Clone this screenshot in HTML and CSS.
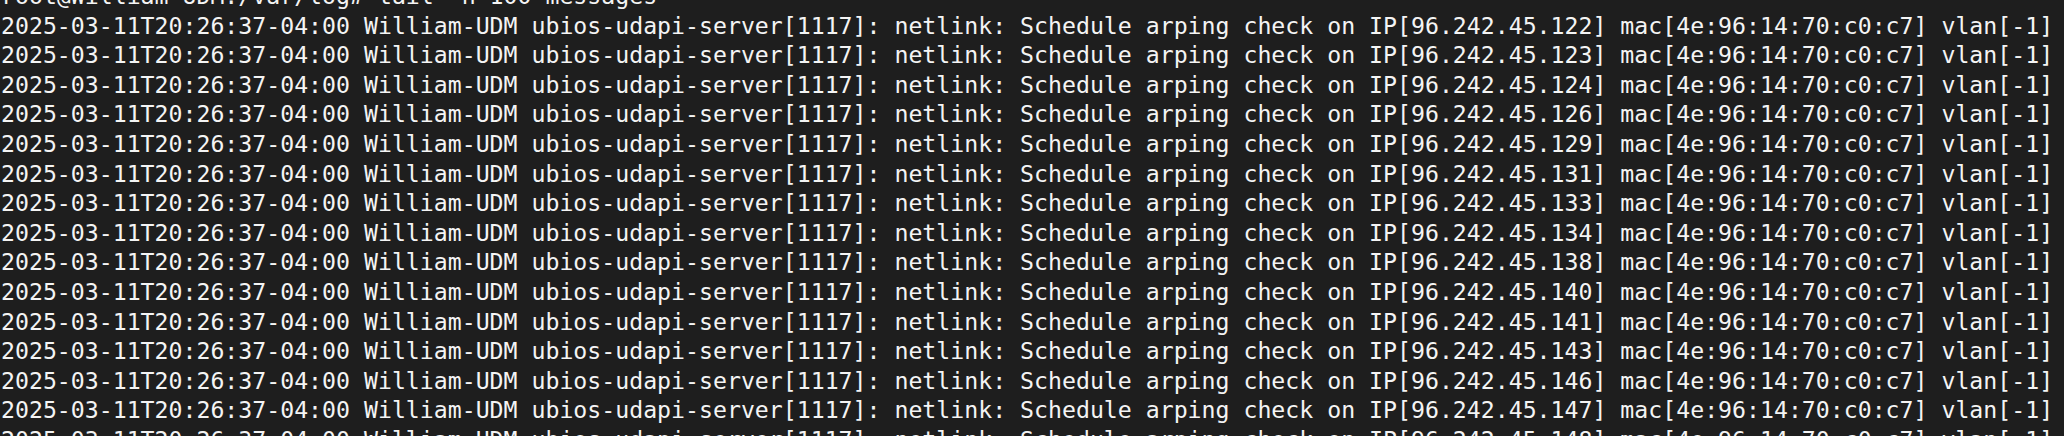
FILE: index.html
```html
<!DOCTYPE html>
<html>
<head>
<meta charset="utf-8">
<link rel="stylesheet" href="styles.css">
</head>
<body>
<div class="terminal">
<div class="line">root@William-UDM:/var/log# tail -n 100 messages</div>
<div class="line">2025-03-11T20:26:37-04:00 William-UDM ubios-udapi-server[1117]: netlink: Schedule arping check on IP[96.242.45.122] mac[4e:96:14:70:c0:c7] vlan[-1]</div>
<div class="line">2025-03-11T20:26:37-04:00 William-UDM ubios-udapi-server[1117]: netlink: Schedule arping check on IP[96.242.45.123] mac[4e:96:14:70:c0:c7] vlan[-1]</div>
<div class="line">2025-03-11T20:26:37-04:00 William-UDM ubios-udapi-server[1117]: netlink: Schedule arping check on IP[96.242.45.124] mac[4e:96:14:70:c0:c7] vlan[-1]</div>
<div class="line">2025-03-11T20:26:37-04:00 William-UDM ubios-udapi-server[1117]: netlink: Schedule arping check on IP[96.242.45.126] mac[4e:96:14:70:c0:c7] vlan[-1]</div>
<div class="line">2025-03-11T20:26:37-04:00 William-UDM ubios-udapi-server[1117]: netlink: Schedule arping check on IP[96.242.45.129] mac[4e:96:14:70:c0:c7] vlan[-1]</div>
<div class="line">2025-03-11T20:26:37-04:00 William-UDM ubios-udapi-server[1117]: netlink: Schedule arping check on IP[96.242.45.131] mac[4e:96:14:70:c0:c7] vlan[-1]</div>
<div class="line">2025-03-11T20:26:37-04:00 William-UDM ubios-udapi-server[1117]: netlink: Schedule arping check on IP[96.242.45.133] mac[4e:96:14:70:c0:c7] vlan[-1]</div>
<div class="line">2025-03-11T20:26:37-04:00 William-UDM ubios-udapi-server[1117]: netlink: Schedule arping check on IP[96.242.45.134] mac[4e:96:14:70:c0:c7] vlan[-1]</div>
<div class="line">2025-03-11T20:26:37-04:00 William-UDM ubios-udapi-server[1117]: netlink: Schedule arping check on IP[96.242.45.138] mac[4e:96:14:70:c0:c7] vlan[-1]</div>
<div class="line">2025-03-11T20:26:37-04:00 William-UDM ubios-udapi-server[1117]: netlink: Schedule arping check on IP[96.242.45.140] mac[4e:96:14:70:c0:c7] vlan[-1]</div>
<div class="line">2025-03-11T20:26:37-04:00 William-UDM ubios-udapi-server[1117]: netlink: Schedule arping check on IP[96.242.45.141] mac[4e:96:14:70:c0:c7] vlan[-1]</div>
<div class="line">2025-03-11T20:26:37-04:00 William-UDM ubios-udapi-server[1117]: netlink: Schedule arping check on IP[96.242.45.143] mac[4e:96:14:70:c0:c7] vlan[-1]</div>
<div class="line">2025-03-11T20:26:37-04:00 William-UDM ubios-udapi-server[1117]: netlink: Schedule arping check on IP[96.242.45.146] mac[4e:96:14:70:c0:c7] vlan[-1]</div>
<div class="line">2025-03-11T20:26:37-04:00 William-UDM ubios-udapi-server[1117]: netlink: Schedule arping check on IP[96.242.45.147] mac[4e:96:14:70:c0:c7] vlan[-1]</div>
<div class="line">2025-03-11T20:26:37-04:00 William-UDM ubios-udapi-server[1117]: netlink: Schedule arping check on IP[96.242.45.148] mac[4e:96:14:70:c0:c7] vlan[-1]</div>
</div>
</body>
</html>
```
FILE: styles.css
```css
html, body {
  margin: 0;
  padding: 0;
  background: #1e1e1e;
  height: 100%;
  overflow: hidden;
}
.terminal {
  margin-top: -19px;
  padding-left: 1px;
  font-family: "DejaVu Sans Mono", "Liberation Mono", monospace;
  font-size: 23.2px;
  line-height: 29.6px;
  color: #f4f4f4;
}
.line {
  white-space: pre;
}
```
